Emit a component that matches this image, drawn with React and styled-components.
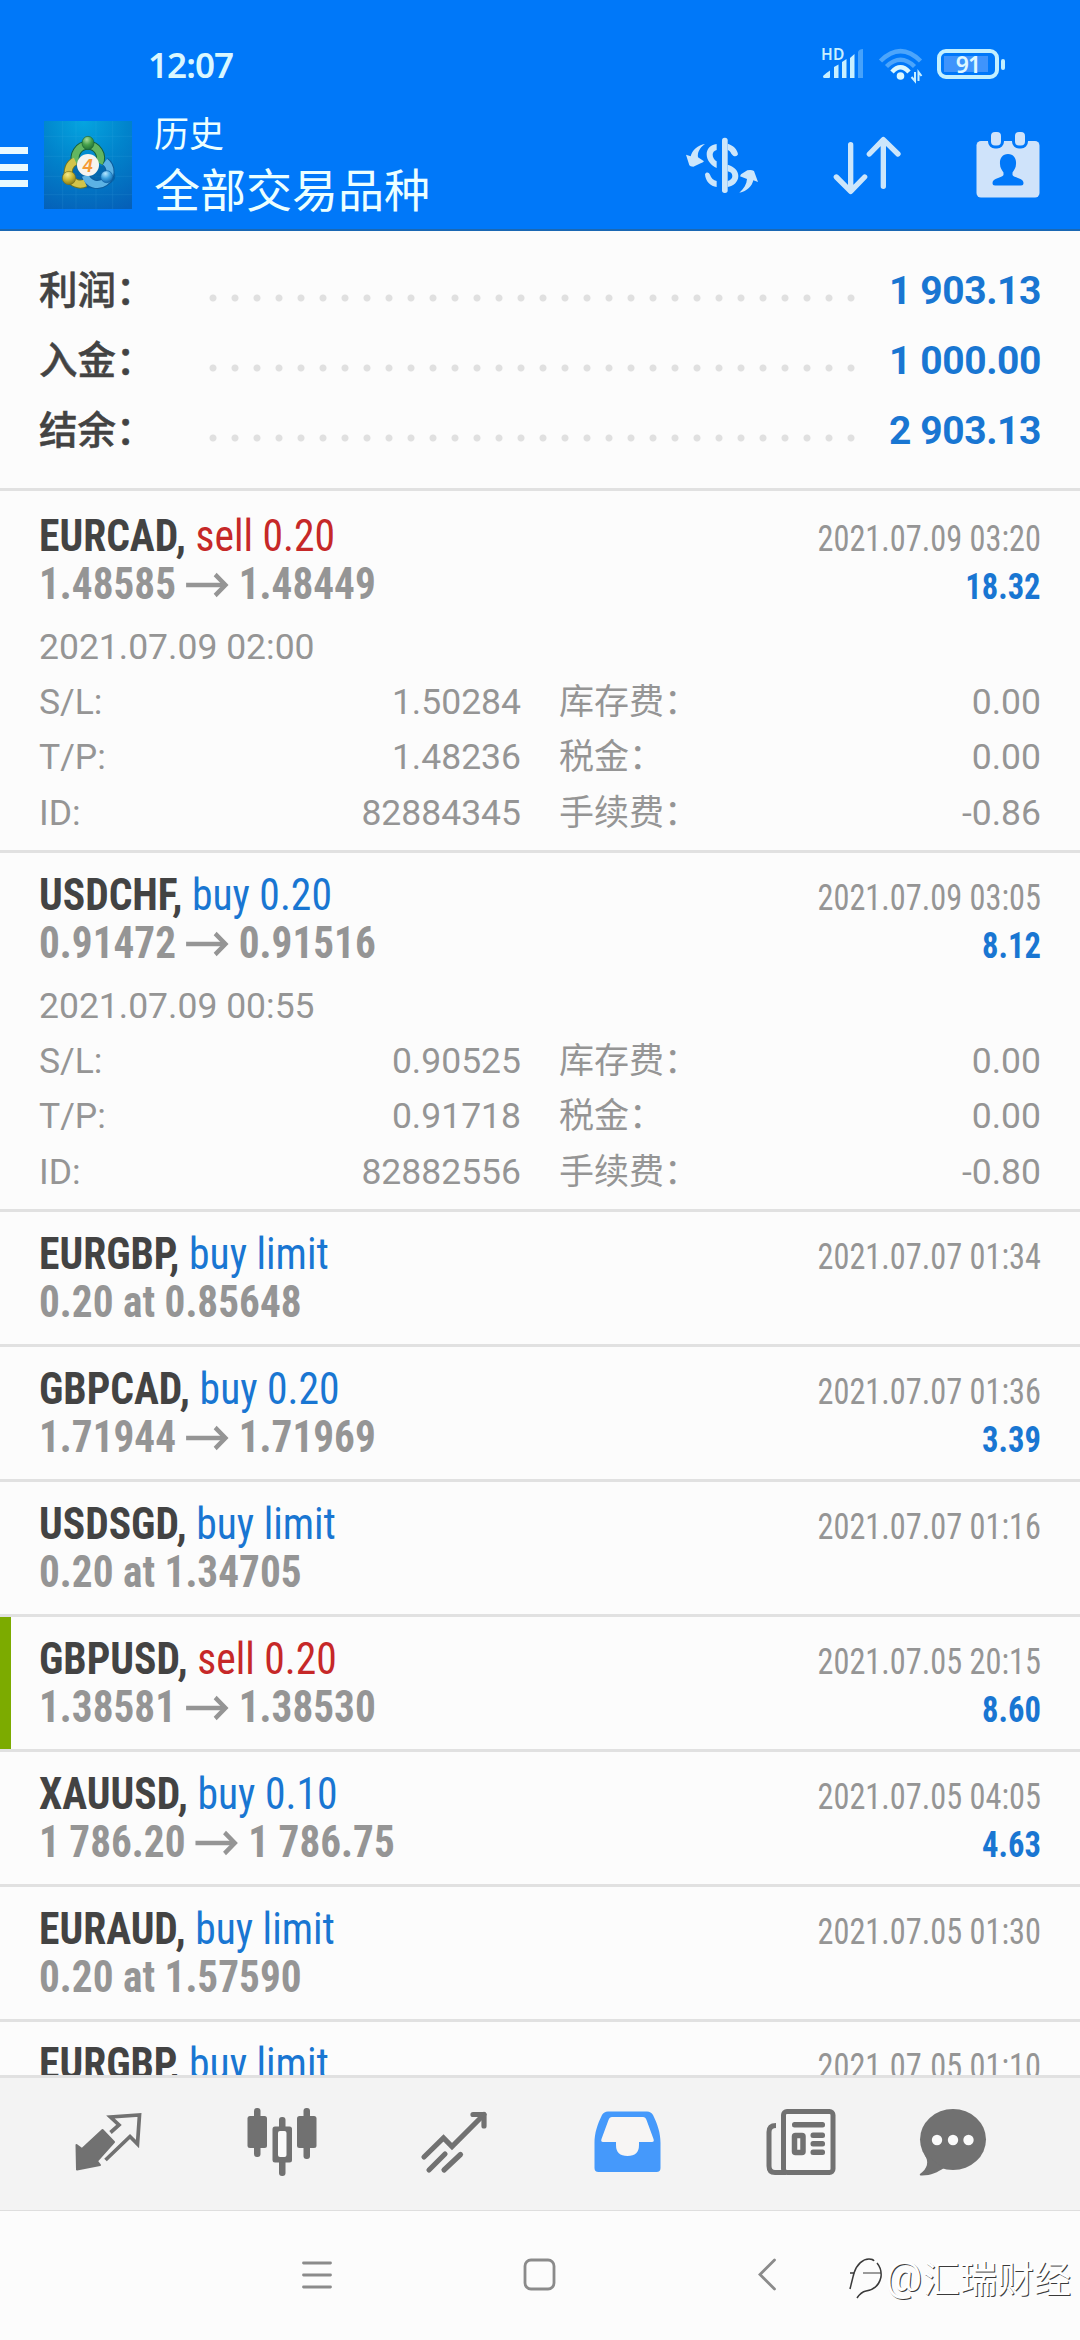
import React from 'react'
import styled, { createGlobalStyle } from 'styled-components'

const GlobalStyle = createGlobalStyle`
    * { box-sizing: border-box; }
    body {
        margin: 0;
        background: #fcfcfc;
        font-family: Roboto, "Noto Sans CJK SC", sans-serif;
    }
    svg { display: block; overflow: visible; }
`

// //STYLING
const Screen = styled.div`
    position: relative;
    width: 1080px;
    height: 2340px;
    display: flex;
    flex-direction: column;
    overflow: hidden;
    background: #fcfcfc;
`
const Header = styled.header`
    height: 231px;
    flex: none;
    background: #0078f9;
    border-bottom: 2px solid #1a68b4;
`
const StatusBar = styled.div`
    height: 100px;
    display: flex;
    align-items: flex-start;
    padding: 48px 74px 0 148px;
`
const Clock = styled.div`
    flex: 1;
    font-family: "Noto Sans", sans-serif;
    font-weight: 600;
    font-size: 35px;
    line-height: 34px;
    letter-spacing: -0.9px;
    color: #d9f7ff;
`
const StatusIcons = styled.div`
    display: flex;
    gap: 15px;
`
const AppBar = styled.div`
    height: 129px;
    display: flex;
    align-items: center;
    padding-right: 40px;
`
const MenuButton = styled.div`
    width: 28px;
    height: 40px;
    margin: 5px 16px 0 0;
    display: flex;
    flex-direction: column;
    justify-content: space-between;
    span {
        height: 7px;
        background: #e9faff;
    }
`
const Titles = styled.div`
    flex: 1;
    margin-left: 22px;
    padding-top: 2px;
    color: #ecffff;
`
const Subtitle = styled.div`
    font-size: 35px;
    line-height: 50px;
`
const Title = styled.div`
    font-size: 46px;
    line-height: 60px;
`
const Actions = styled.div`
    display: flex;
    align-items: center;
    gap: 74px;
`

const Summary = styled.section`
    height: 260px;
    flex: none;
    padding: 25px 39px 0;
    border-bottom: 3px solid #e1e1e1;
`
const SummaryRow = styled.div`
    height: 70px;
    display: flex;
    align-items: center;
`
const SummaryLabel = styled.div`
    width: 163px;
    font-size: 38.5px;
    font-weight: 500;
    line-height: 60px;
    color: #434343;
    -webkit-text-stroke: 0.5px #434343;
`
const Dots = styled.div`
    width: 660px;
    height: 8px;
    margin-top: 13px;
    background: radial-gradient(circle at 11px 4px, #e0e0e0 3px, transparent 4px) 0 0 / 22px 8px repeat-x;
`
const SummaryValue = styled.div`
    flex: 1;
    text-align: right;
    white-space: nowrap;
    font-size: 39px;
    font-weight: 700;
    letter-spacing: -0.4px;
    color: #1976d2;
`

const List = styled.main`
    flex: 1;
    min-height: 0;
    overflow: hidden;
`
const Deal = styled.article`
    border-bottom: 3px solid #e1e1e1;
    box-shadow: ${props => props.$marked ? 'inset 11px 0 0 #7cab00' : 'none'};
    padding: ${props => props.$first ? 21 : 18}px 39px ${props => props.$open ? 9 : 18}px;
`
const DealLine = styled.div`
    height: 48px;
    display: flex;
    justify-content: space-between;
    align-items: baseline;
    line-height: 48px;
    white-space: pre;
    font-family: "Roboto Condensed", Roboto, sans-serif;
    font-stretch: 75%;
`
const Symbol = styled.div`
    font-size: 44px;
    font-weight: 700;
    color: #434343;
    transform: scaleX(0.945);
    transform-origin: left;
`
const Side = styled.span`
    font-weight: 400;
    color: ${props => props.$sell ? '#c62828' : '#1976d2'};
`
const Price = styled.div`
    display: flex;
    font-size: 44px;
    font-weight: 700;
    color: #959595;
    transform: scaleX(0.937);
    transform-origin: left;
    svg {
        margin: 13px 10px 0 11px;
    }
`
const CloseTime = styled.div`
    font-size: 37px;
    color: #959595;
    transform: scaleX(0.873);
    transform-origin: right;
`
const Profit = styled.div`
    font-size: 37px;
    font-weight: 700;
    color: #1976d2;
    transform: scaleX(0.88);
    transform-origin: right;
`
const Details = styled.div`
    margin-top: 11px;
    font-size: 35.5px;
    color: #959595;
`
const OpenTime = styled.div`
    height: 56px;
    line-height: 56px;
`
const DetailGrid = styled.div`
    height: 166px;
    display: grid;
    grid-template-columns: 140px 342px 1fr auto;
    grid-template-rows: repeat(3, 1fr);
    line-height: 55px;
`
const Cell = styled.div`
    height: 55px;
    text-align: ${props => props.$right ? 'right' : 'left'};
    padding-left: ${props => props.$fee ? 38 : 0}px;
    font-size: ${props => props.$fee ? 35 : 35.5}px;
`

const TabBar = styled.nav`
    height: 136px;
    flex: none;
    display: flex;
    padding-left: 22px;
    background: #f3f3f3;
    border-top: 3px solid #e1e1e1;
    border-bottom: 1px solid #dedede;
`
const Tab = styled.div`
    width: ${props => props.$last ? 132 : 173}px;
    padding-bottom: 4px;
    display: flex;
    align-items: center;
    justify-content: center;
    color: ${props => props.$active ? '#4599fb' : '#717171'};
`
const SystemNav = styled.div`
    height: 129px;
    flex: none;
    display: flex;
    align-items: center;
    padding: 0 0 2px 302px;
`
const NavButton = styled.div`
    margin-right: ${props => props.$gap || 0}px;
`
const Watermark = styled.div`
    position: absolute;
    right: 9px;
    bottom: 36px;
    display: flex;
    align-items: center;
    gap: 1px;
    font-family: "Noto Sans CJK SC", sans-serif;
    font-size: 37px;
    line-height: 54px;
    color: #fff;
    text-shadow: 1px 1px 0 #3a3a3a;
`
const AtSign = styled.span`
    font-family: Roboto, sans-serif;
    font-size: 41px;
`

// //ICONS
const SignalIcon = () => (
    <svg width="42" height="32" viewBox="0 0 42 32" fill="#c9f0ff">
        <text x="-1" y="11.5" fontFamily="Noto Sans" fontWeight="600" fontSize="15.5" letterSpacing=".3">HD</text>
        <path d="M1 28Q4 25 8 22.500V29Q8 30 7 30H2Q1 30 1 28Z" />
        <path d="M12 19L16.500 16.500V30H12Z" />
        <path d="M20 14L24.500 11V30H20Z" />
        <path d="M28 10L32.500 6V30H28Z" />
        <path d="M36 4Q37 1 41 1V30H36Z" opacity=".35" />
    </svg>
)

const WifiIcon = () => (
    <svg width="43" height="34" viewBox="0 0 43 34" fill="none" stroke="#c9f0ff" strokeWidth="4.500">
        <path d="M1.500 13Q21.500 -7 41.500 13" opacity=".38" />
        <path d="M7.500 18.500Q21.500 5 35.500 18.500" opacity=".38" />
        <path d="M13 24Q21.500 14.500 30 24" stroke="#dcf8ff" />
        <circle cx="21.500" cy="28" r="3.800" fill="#dcf8ff" stroke="none" />
        <path d="M36 24V33L32.500 29M39.500 33V24L42.500 28" strokeWidth="2" />
    </svg>
)

const BatteryIcon = () => (
    <svg width="69" height="32" viewBox="0 0 69 32">
        <rect x="2" y="3" width="58" height="26" rx="7" fill="none" stroke="#c3f0ff" strokeWidth="4" />
        <rect x="7" y="8" width="44" height="16" fill="#3f94fc" />
        <rect x="64" y="11" width="4" height="11" rx="2" fill="#c3f0ff" />
        <text x="31" y="24.500" textAnchor="middle" fontFamily="Noto Sans" fontWeight="600" fontSize="23" letterSpacing="-1" fill="#dff8ff">91</text>
    </svg>
)

const AppLogo = () => (
    <svg width="88" height="88" viewBox="24 14 264 264">
        <defs>
            <radialGradient id="sky" cx=".45" cy="0" r="1.100">
                <stop offset="0" stopColor="#05a5e0" />
                <stop offset=".45" stopColor="#0184cc" />
                <stop offset="1" stopColor="#0560b8" />
            </radialGradient>
            <radialGradient id="green" cx=".4" cy=".25" r=".8">
                <stop offset="0" stopColor="#a8dc9c" />
                <stop offset=".5" stopColor="#45a04a" />
                <stop offset="1" stopColor="#1c6a35" />
            </radialGradient>
            <radialGradient id="gold" cx=".4" cy=".25" r=".8">
                <stop offset="0" stopColor="#f5ec8c" />
                <stop offset=".5" stopColor="#c9b733" />
                <stop offset="1" stopColor="#7d7419" />
            </radialGradient>
            <radialGradient id="azure" cx=".4" cy=".25" r=".8">
                <stop offset="0" stopColor="#b5e6ff" />
                <stop offset=".5" stopColor="#3fa3df" />
                <stop offset="1" stopColor="#0c62ab" />
            </radialGradient>
        </defs>
        <rect x="24" y="14" width="264" height="264" fill="url(#sky)" />
        <path d="M80 14V278M120 14V278M180 14V278M230 14V278M24 60H288M24 120H288M24 180H288M24 235H288" stroke="#5cc3f0" strokeWidth="1.500" opacity=".22" />
        <ellipse cx="158" cy="180" rx="80" ry="36" fill="#03407c" opacity=".35" />
        <g fill="none" strokeWidth="27">
            <g stroke="#155e3c">
                <path d="M121 141A38 38 0 1 1 190 141" />
                <path d="M148 200A36 36 0 1 1 118 134" stroke="#6f7521" />
                <path d="M207 136A38 38 0 1 1 148 178" stroke="#0e5c9c" />
            </g>
            <g stroke="#62b661" strokeWidth="21">
                <path d="M121 141A38 38 0 1 1 190 141" />
                <path d="M148 200A36 36 0 1 1 118 134" stroke="#d2c44a" />
                <path d="M207 136A38 38 0 1 1 148 178" stroke="#5cb2e4" />
            </g>
        </g>
        <ellipse cx="156" cy="80" rx="18" ry="20" fill="url(#green)" stroke="#1a6334" strokeWidth="2" />
        <circle cx="99" cy="185" r="20" fill="url(#gold)" stroke="#797119" strokeWidth="2" />
        <circle cx="212" cy="181" r="18" fill="url(#azure)" stroke="#0d5fa4" strokeWidth="2" />
        <circle cx="156" cy="146" r="33" fill="#f6f4ef" />
        <text x="155" y="166" textAnchor="middle" fontFamily="Liberation Sans" fontStyle="italic" fontWeight="700" fontSize="54" fill="#f59a35">4</text>
    </svg>
)

const CurrencyIcon = () => (
    <svg width="74" height="58" viewBox="45 42 222 174" fill="#cce6fb">
        <rect x="156" y="47" width="17" height="166" rx="8" />
        <path d="M140 66C120 68 110 82 110 97C110 115 124 132 140 138V118C133 114 128 106 128 98C128 92 132 86 140 84Z" />
        <path d="M105 157C108 150 116 150 120 158C123 168 131 175 140 177V195C122 193 106 178 105 157Z" />
        <path d="M173 65C190 70 202 82 204 97C200 106 190 104 184 95C181 89 178 86 173 84Z" />
        <path d="M173 128C192 134 205 145 205 162C205 180 190 192 173 195V177C182 175 187 169 187 162C187 154 182 150 173 148Z" />
        <path d="M105 66C88 78 82 92 84 106L102 118Q98 122 92 124L70 134Q60 134 58 130L48 98L62 103C66 86 84 68 105 66Z" />
        <path d="M213 157L232 145Q244 142 252 147Q256 158 264 180L250 175C246 192 232 208 208 212C222 200 230 186 231 171L210 163Z" />
    </svg>
)

const SortIcon = () => (
    <svg width="69" height="60" viewBox="483 42 207 180" fill="none" stroke="#cce6fb" strokeWidth="16" strokeLinecap="round" strokeLinejoin="round">
        <path d="M536 71V208M493 168L536 211L578 168" />
        <path d="M634 196V58M592 99L634 56L678 99" />
    </svg>
)

const CalendarIcon = () => (
    <svg width="64" height="66" viewBox="0 0 64 66" fill="#cfe3fa">
        <rect x=".5" y="9" width="63" height="56.500" rx="4.500" />
        <g stroke="#0078f9" strokeWidth="3">
            <rect x="13.500" y="-1.500" width="13" height="16.500" rx="5.500" />
            <rect x="37.500" y="-1.500" width="13" height="16.500" rx="5.500" />
        </g>
        <path fill="#0078f9" d="M32 22C38 22 40.500 27 40 32C40 36 38 38 36.500 40.500V43C38 46 47.500 46 47.500 51Q47.500 53.500 45 53.500H19Q16.500 53.500 16.500 51C16.500 46 26 46 27.500 43V40.500C26 38 24 36 24 32C23.500 27 26 22 32 22Z" />
    </svg>
)

const ArrowIcon = () => (
    <svg width="46" height="24" viewBox="0 0 46 24" fill="none" stroke="#959595" strokeWidth="4.500">
        <path d="M0 12H42" />
        <path d="M31 1.500L42 12L31 22.500" />
    </svg>
)

const QuotesIcon = () => (
    <svg width="70" height="62" viewBox="0 0 70 62">
        <path fill="currentColor" stroke="currentColor" strokeWidth="2" strokeLinejoin="round" d="M2.500 34L8 38L28.500 19L40 31L23 50L26 54L3 58.500Z" />
        <path fill="none" stroke="currentColor" strokeWidth="3.700" d="M36.500 21.500L45 14L36.500 6L65.500 4L63.500 33L56 25.500L31.500 49" />
    </svg>
)

const CandlesIcon = () => (
    <svg width="70" height="70" viewBox="0 0 70 70" fill="currentColor">
        <rect x="7" y="1" width="6.500" height="49" rx="3" />
        <rect x=".5" y="9" width="19.500" height="32" rx="2.500" />
        <rect x="56.500" y="1" width="6.500" height="51" rx="3" />
        <rect x="50" y="9" width="19.500" height="32" rx="2.500" />
        <rect x="32" y="10" width="6.500" height="59" rx="3" />
        <rect x="25.500" y="19.500" width="19.500" height="36" rx="2.500" />
        <rect x="31" y="24" width="8.500" height="26" rx="2" fill="#fafafa" />
    </svg>
)

const ChartIcon = () => (
    <svg width="69" height="66" viewBox="0 0 69 66" fill="none" stroke="currentColor" strokeWidth="5.200" strokeLinecap="round">
        <path d="M4 48L23.500 29L32 37.500L64 5.500" strokeLinejoin="miter" />
        <path d="M53 5.500H64V17" strokeLinejoin="round" />
        <path d="M9 61L25 45M24 61L40.500 45.500" />
    </svg>
)

const InboxIcon = () => (
    <svg width="67" height="62" viewBox="0 0 67 62">
        <path d="M14 5H53L62 30L45 36V48H22V36L6 30Z" fill="#f7f5f4" />
        <path
            fill="currentColor"
            fillRule="evenodd"
            d="M14 .5H53Q57 .5 59 4C63.500 13 66.500 22 66.500 32V57Q66.500 61 62.500 61H4.500Q.5 61 .5 57V32C.5 22 3.500 13 8 4Q10 .5 14 .5ZM18 6Q15.500 6 14.500 9L7.500 28Q6.500 31 9 31H22V34Q22 45 33.500 45Q45 45 45 34V31H58Q60.500 31 59.500 28L52.500 9Q51.500 6 49 6Z"
        />
    </svg>
)

const NewsIcon = () => (
    <svg width="70" height="68" viewBox="0 0 70 68">
        <path d="M10 17.500Q3 17.500 3 24V58Q3 64.500 9 64.500H20" fill="none" stroke="currentColor" strokeWidth="5" />
        <rect x="17.500" y="3.500" width="49.500" height="61" rx="3.500" fill="#f8f8f8" stroke="currentColor" strokeWidth="5" />
        <rect x="26" y="14" width="33" height="5.500" rx="2.500" fill="currentColor" />
        <rect x="28.500" y="27.500" width="8.500" height="17" rx="1" fill="none" stroke="currentColor" strokeWidth="5.500" />
        <g fill="currentColor">
            <rect x="44.500" y="24.500" width="14.500" height="5.500" rx="2.500" />
            <rect x="44.500" y="33" width="14.500" height="5.500" rx="2.500" />
            <rect x="44.500" y="41.500" width="14.500" height="5.500" rx="2.500" />
        </g>
    </svg>
)

const ChatIcon = () => (
    <svg width="68" height="68" viewBox="0 0 68 68">
        <g fill="currentColor">
            <ellipse cx="34" cy="31.500" rx="33" ry="30.500" />
            <path d="M5 46C11 54 8 61 1 66Q0 67.500 3 67.500C12 67.500 19 64 25 60Z" />
        </g>
        <g fill="#fafafa">
            <circle cx="18" cy="32" r="5.200" />
            <circle cx="34" cy="32" r="5.200" />
            <circle cx="49.500" cy="32" r="5.200" />
        </g>
    </svg>
)

const WatermarkLogo = () => (
    <svg width="36" height="44" viewBox="0 0 36 44" fill="none" stroke="#3a3a3a" strokeWidth="1.500">
        <path d="M2 18H6C9 9 15 4 21 4Q25 4 26 6" />
        <path d="M6 18L2 34" />
        <path d="M15 18H33" strokeWidth="1" />
        <path d="M29 8Q34 14 33 22C31 31 25 35 18 36Q13 37 9 43" />
    </svg>
)

// //DATA
const totals = [
    ['利润：', '1 903.13'],
    ['入金：', '1 000.00'],
    ['结余：', '2 903.13'],
]

const deals = [
    { symbol: 'EURCAD', side: 'sell 0.20', from: '1.48585', to: '1.48449', time: '2021.07.09 03:20', profit: '18.32',
      details: { open: '2021.07.09 02:00', sl: '1.50284', tp: '1.48236', id: '82884345', swap: '0.00', tax: '0.00', fee: '-0.86' } },
    { symbol: 'USDCHF', side: 'buy 0.20', from: '0.91472', to: '0.91516', time: '2021.07.09 03:05', profit: '8.12',
      details: { open: '2021.07.09 00:55', sl: '0.90525', tp: '0.91718', id: '82882556', swap: '0.00', tax: '0.00', fee: '-0.80' } },
    { symbol: 'EURGBP', side: 'buy limit', from: '0.20 at 0.85648', time: '2021.07.07 01:34' },
    { symbol: 'GBPCAD', side: 'buy 0.20', from: '1.71944', to: '1.71969', time: '2021.07.07 01:36', profit: '3.39' },
    { symbol: 'USDSGD', side: 'buy limit', from: '0.20 at 1.34705', time: '2021.07.07 01:16' },
    { symbol: 'GBPUSD', side: 'sell 0.20', from: '1.38581', to: '1.38530', time: '2021.07.05 20:15', profit: '8.60', marked: true },
    { symbol: 'XAUUSD', side: 'buy 0.10', from: '1 786.20', to: '1 786.75', time: '2021.07.05 04:05', profit: '4.63' },
    { symbol: 'EURAUD', side: 'buy limit', from: '0.20 at 1.57590', time: '2021.07.05 01:30' },
    { symbol: 'EURGBP', side: 'buy limit', time: '2021.07.05 01:10' },
]

const tabs = [QuotesIcon, CandlesIcon, ChartIcon, InboxIcon, NewsIcon, ChatIcon]

const DealDetails = ({details}) => (
    <Details>
        <OpenTime>{details.open}</OpenTime>
        <DetailGrid>
            <Cell>S/L:</Cell>
            <Cell $right>{details.sl}</Cell>
            <Cell $fee>库存费：</Cell>
            <Cell $right>{details.swap}</Cell>
            <Cell>T/P:</Cell>
            <Cell $right>{details.tp}</Cell>
            <Cell $fee>税金：</Cell>
            <Cell $right>{details.tax}</Cell>
            <Cell>ID:</Cell>
            <Cell $right>{details.id}</Cell>
            <Cell $fee>手续费：</Cell>
            <Cell $right>{details.fee}</Cell>
        </DetailGrid>
    </Details>
)

const DealItem = ({deal, first}) => (
    <Deal $first={first} $open={!!deal.details} $marked={deal.marked}>
        <DealLine>
            <Symbol>{deal.symbol}, <Side $sell={deal.side.startsWith('sell')}>{deal.side}</Side></Symbol>
            <CloseTime>{deal.time}</CloseTime>
        </DealLine>
        <DealLine>
            <Price>
                <span>{deal.from}</span>
                {deal.to && <ArrowIcon />}
                {deal.to && <span>{deal.to}</span>}
            </Price>
            {deal.profit && <Profit>{deal.profit}</Profit>}
        </DealLine>
        {deal.details && <DealDetails details={deal.details} />}
    </Deal>
)

const App = () => {
    return (
        <Screen>
            <GlobalStyle />
            <Header>
                <StatusBar>
                    <Clock>12:07</Clock>
                    <StatusIcons>
                        <SignalIcon />
                        <WifiIcon />
                        <BatteryIcon />
                    </StatusIcons>
                </StatusBar>
                <AppBar>
                    <MenuButton><span /><span /><span /></MenuButton>
                    <AppLogo />
                    <Titles>
                        <Subtitle>历史</Subtitle>
                        <Title>全部交易品种</Title>
                    </Titles>
                    <Actions>
                        <CurrencyIcon />
                        <SortIcon />
                        <CalendarIcon />
                    </Actions>
                </AppBar>
            </Header>
            <Summary>
                {totals.map(([label, value]) => (
                    <SummaryRow key={label}>
                        <SummaryLabel>{label}</SummaryLabel>
                        <Dots />
                        <SummaryValue>{value}</SummaryValue>
                    </SummaryRow>
                ))}
            </Summary>
            <List>
                {deals.map((deal, i) => <DealItem key={deal.time} deal={deal} first={i === 0} />)}
            </List>
            <TabBar>
                {tabs.map((Icon, i) => (
                    <Tab key={i} $active={i === 3} $last={i === 5}><Icon /></Tab>
                ))}
            </TabBar>
            <SystemNav>
                <NavButton $gap={191}>
                    <svg width="30" height="28" viewBox="0 0 30 28" stroke="#8b8b8b" strokeWidth="2.800" strokeLinecap="round">
                        <path d="M1.500 2H28.500M1.500 14H28.500M1.500 26H28.500" />
                    </svg>
                </NavButton>
                <NavButton $gap={202}>
                    <svg width="33" height="33" viewBox="0 0 33 33" fill="none" stroke="#8b8b8b" strokeWidth="2.800">
                        <rect x="2" y="2" width="29" height="29" rx="6" />
                    </svg>
                </NavButton>
                <NavButton>
                    <svg width="18" height="33" viewBox="0 0 18 33" fill="none" stroke="#8b8b8b" strokeWidth="2.800" strokeLinecap="round">
                        <path d="M16.500 2L2 16.500L16.500 31" />
                    </svg>
                </NavButton>
            </SystemNav>
            <Watermark>
                <WatermarkLogo />
                <AtSign>@</AtSign>
                <span>汇瑞财经</span>
            </Watermark>
        </Screen>
    )
}

export default App
